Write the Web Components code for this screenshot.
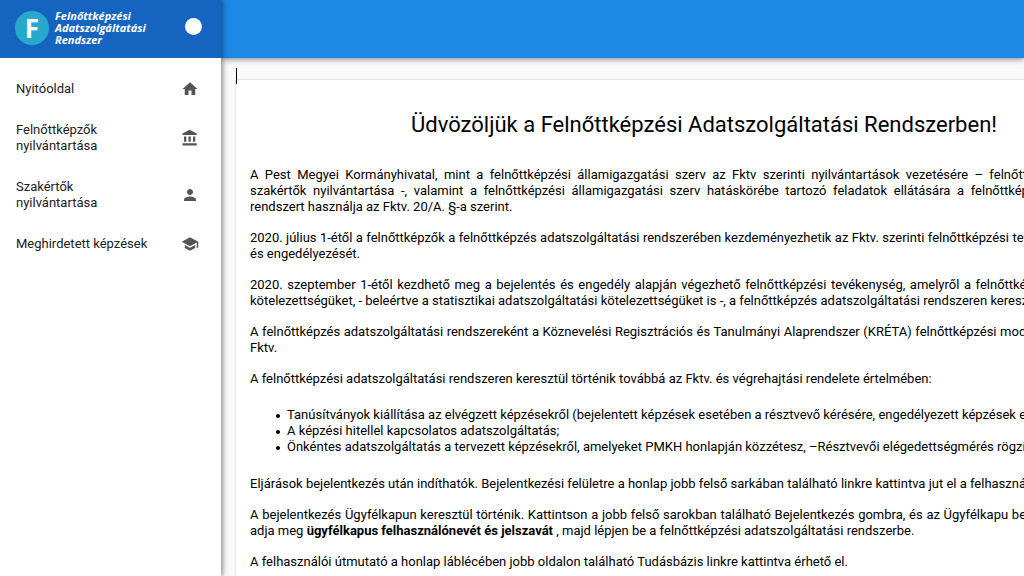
<!DOCTYPE html>
<html lang="hu">
<head>
<meta charset="utf-8">
<meta name="viewport" content="width=device-width, initial-scale=1">
<title>Felnőttképzési Adatszolgáltatási Rendszer</title>
<style>
  html, body { margin: 0; height: 100%; }
  body { font: 13px/16px Roboto, "Liberation Sans", sans-serif; color: #000; background: #fafafa; overflow: hidden; }
</style>
</head>
<body>
<far-app>
  <far-brand slot="side"></far-brand>
  <far-nav slot="side">
    <far-nav-item icon="home">Nyitóoldal</far-nav-item>
    <far-nav-item icon="bank">Felnőttképzők nyilvántartása</far-nav-item>
    <far-nav-item icon="person">Szakértők nyilvántartása</far-nav-item>
    <far-nav-item icon="school">Meghirdetett képzések</far-nav-item>
  </far-nav>
  <far-card>
    <span slot="title">Üdvözöljük a Felnőttképzési Adatszolgáltatási Rendszerben!</span>
    <far-text>A Pest Megyei Kormányhivatal, mint a felnőttképzési államigazgatási szerv az Fktv szerinti nyilvántartások vezetésére – felnőttképzők nyilvántartása, szakértők nyilvántartása -, valamint a felnőttképzési államigazgatási szerv hatáskörébe tartozó feladatok ellátására a felnőttképzési adatszolgáltatási rendszert használja az Fktv. 20/A. §-a szerint.</far-text>
    <far-text>2020. július 1-étől a felnőttképzők a felnőttképzés adatszolgáltatási rendszerében kezdeményezhetik az Fktv. szerinti felnőttképzési tevékenység bejelentését és engedélyezését.</far-text>
    <far-text>2020. szeptember 1-étől kezdhető meg a bejelentés és engedély alapján végezhető felnőttképzési tevékenység, amelyről a felnőttképzők adatszolgáltatási kötelezettségüket, - beleértve a statisztikai adatszolgáltatási kötelezettségüket is -, a felnőttképzés adatszolgáltatási rendszeren keresztül teljesítik.</far-text>
    <far-text>A felnőttképzés adatszolgáltatási rendszereként a Köznevelési Regisztrációs és Tanulmányi Alaprendszer (KRÉTA) felnőttképzési modulját határozza meg az Fktv.</far-text>
    <far-text>A felnőttképzési adatszolgáltatási rendszeren keresztül történik továbbá az Fktv. és végrehajtási rendelete értelmében:</far-text>
    <far-list></far-list>
    <far-text>Eljárások bejelentkezés után indíthatók. Bejelentkezési felületre a honlap jobb felső sarkában található linkre kattintva jut el a felhasználó.</far-text>
    <far-text>A bejelentkezés Ügyfélkapun keresztül történik. Kattintson a jobb felső sarokban található Bejelentkezés gombra, és az Ügyfélkapu bejelentkező felületén ott adja meg <b>ügyfélkapus felhasználónevét és jelszavát</b> , majd lépjen be a felnőttképzési adatszolgáltatási rendszerbe.</far-text>
    <far-text>A felhasználói útmutató a honlap láblécében jobb oldalon található Tudásbázis linkre kattintva érhető el.</far-text>
  </far-card>
</far-app>
<script>
const define = (name, html, setup) => customElements.define(name, class extends HTMLElement {
  connectedCallback() {
    if (this.shadowRoot) return;
    const root = this.attachShadow({ mode: 'open' });
    root.innerHTML = html;
    if (setup) setup(this, root);
  }
});

const ICONS = {
  home: 'M10 20v-6h4v6h5v-8h3L12 3 2 12h3v8z',
  bank: 'M4 10v7h3v-7H4zm6 0v7h3v-7h-3zM2 22h19v-3H2v3zm14-12v7h3v-7h-3zm-4.500-9L2 6v2h19V6l-9.500-5z',
  person: 'M12 12c2.210 0 4-1.790 4-4s-1.790-4-4-4-4 1.790-4 4 1.790 4 4 4zm0 2c-2.670 0-8 1.340-8 4v2h16v-2c0-2.660-5.330-4-8-4z',
  school: 'M5 13.180v4L12 21l7-3.820v-4L12 17l-7-3.820zM12 3L1 9l11 6 9-4.910V17h2V9L12 3z'
};

define('far-app', `
  <style>
    :host { display: grid; grid-template: 58px minmax(0, 1fr) / 221px minmax(0, 1fr); height: 100vh; }
    aside { grid-row: 1 / 3; z-index: 3; background: #fff; box-shadow: 1px 0 6px rgba(0,0,0,.55); }
    header { z-index: 2; background: #1e88e5; box-shadow: 0 1px 6px rgba(0,0,0,.5); }
    main { position: relative; overflow: auto; scrollbar-width: none; padding: 22px 15px 16px; }
    .caret { position: absolute; left: 15px; top: 10px; width: 1px; height: 16px; background: #000; z-index: 1; }
  </style>
  <aside><slot name="side"></slot></aside>
  <header></header>
  <main><i class="caret"></i><slot></slot></main>`);

define('far-brand', `
  <style>
    :host { display: flex; align-items: center; box-sizing: border-box; height: 58px; padding: 0 19px 2px 15px; gap: 6px;
      background: #1565c0; color: #fff; font: italic 700 11px/12px "Open Sans", "Noto Sans", sans-serif; }
    .mark { flex: none; display: grid; place-items: center; width: 34px; height: 34px; border-radius: 50%;
      background: #26a9cb; font: 700 26px/34px "Open Sans", sans-serif; }
    a { flex: 1; color: inherit; text-decoration: none; }
    button { flex: none; width: 17px; height: 17px; margin: 0 0 4px; padding: 0; border: 0; border-radius: 50%; background: #fff; }
  </style>
  <span class="mark">F</span>
  <a href="#">Felnőttképzési<br>Adatszolgáltatási<br>Rendszer</a>
  <button type="button" aria-label="Menü rögzítése"></button>`);

define('far-nav', `
  <style>:host { display: block; } nav { display: flex; flex-direction: column; padding: 11px 0; }</style>
  <nav><slot></slot></nav>`);

define('far-nav-item', `
  <style>
    :host { display: block; }
    a { display: flex; align-items: center; justify-content: space-between; padding: 12px 22px 13px 16px;
      color: #212121; text-decoration: none; }
    span { max-width: 136px; }
    svg { display: block; flex: none; width: 18px; height: 18px; margin: -1px 0; fill: #555; }
  </style>
  <a href="#"><span><slot></slot></span><svg viewBox="0 0 24 24" aria-hidden="true"><path/></svg></a>`,
  (el, root) => root.querySelector('path').setAttribute('d', ICONS[el.getAttribute('icon')]));

define('far-card', `
  <style>
    :host { display: block; box-sizing: border-box; min-width: 937px; padding: 31px 15px 30px 14px; background: #fff;
      box-shadow: 0 0 2px rgba(0,0,0,.25); }
    h1 { margin: 0 0 28px; font-size: 22px; line-height: 28px; font-weight: 400; text-align: center; }
  </style>
  <h1><slot name="title"></slot></h1>
  <slot></slot>`);

define('far-text', `
  <style>:host { display: block; } p { margin: 0 0 15px; text-align: justify; }</style>
  <p><slot></slot></p>`);

define('far-list', `
  <style>
    :host { display: block; }
    ul { margin: 20px 0 21px; padding: 0 0 0 37px; list-style: none; }
    li::before { content: ""; display: inline-block; width: 4px; height: 4px; margin: 0 7px 0 -11px;
      border-radius: 50%; background: currentColor; vertical-align: middle; }
  </style>
  <ul>
    <li>Tanúsítványok kiállítása az elvégzett képzésekről (bejelentett képzések esetében a résztvevő kérésére, engedélyezett képzések esetében);</li>
    <li>A képzési hitellel kapcsolatos adatszolgáltatás;</li>
    <li>Önkéntes adatszolgáltatás a tervezett képzésekről, amelyeket PMKH honlapján közzétesz, –Résztvevői elégedettségmérés rögzítése.</li>
  </ul>`);
</script>
</body>
</html>
